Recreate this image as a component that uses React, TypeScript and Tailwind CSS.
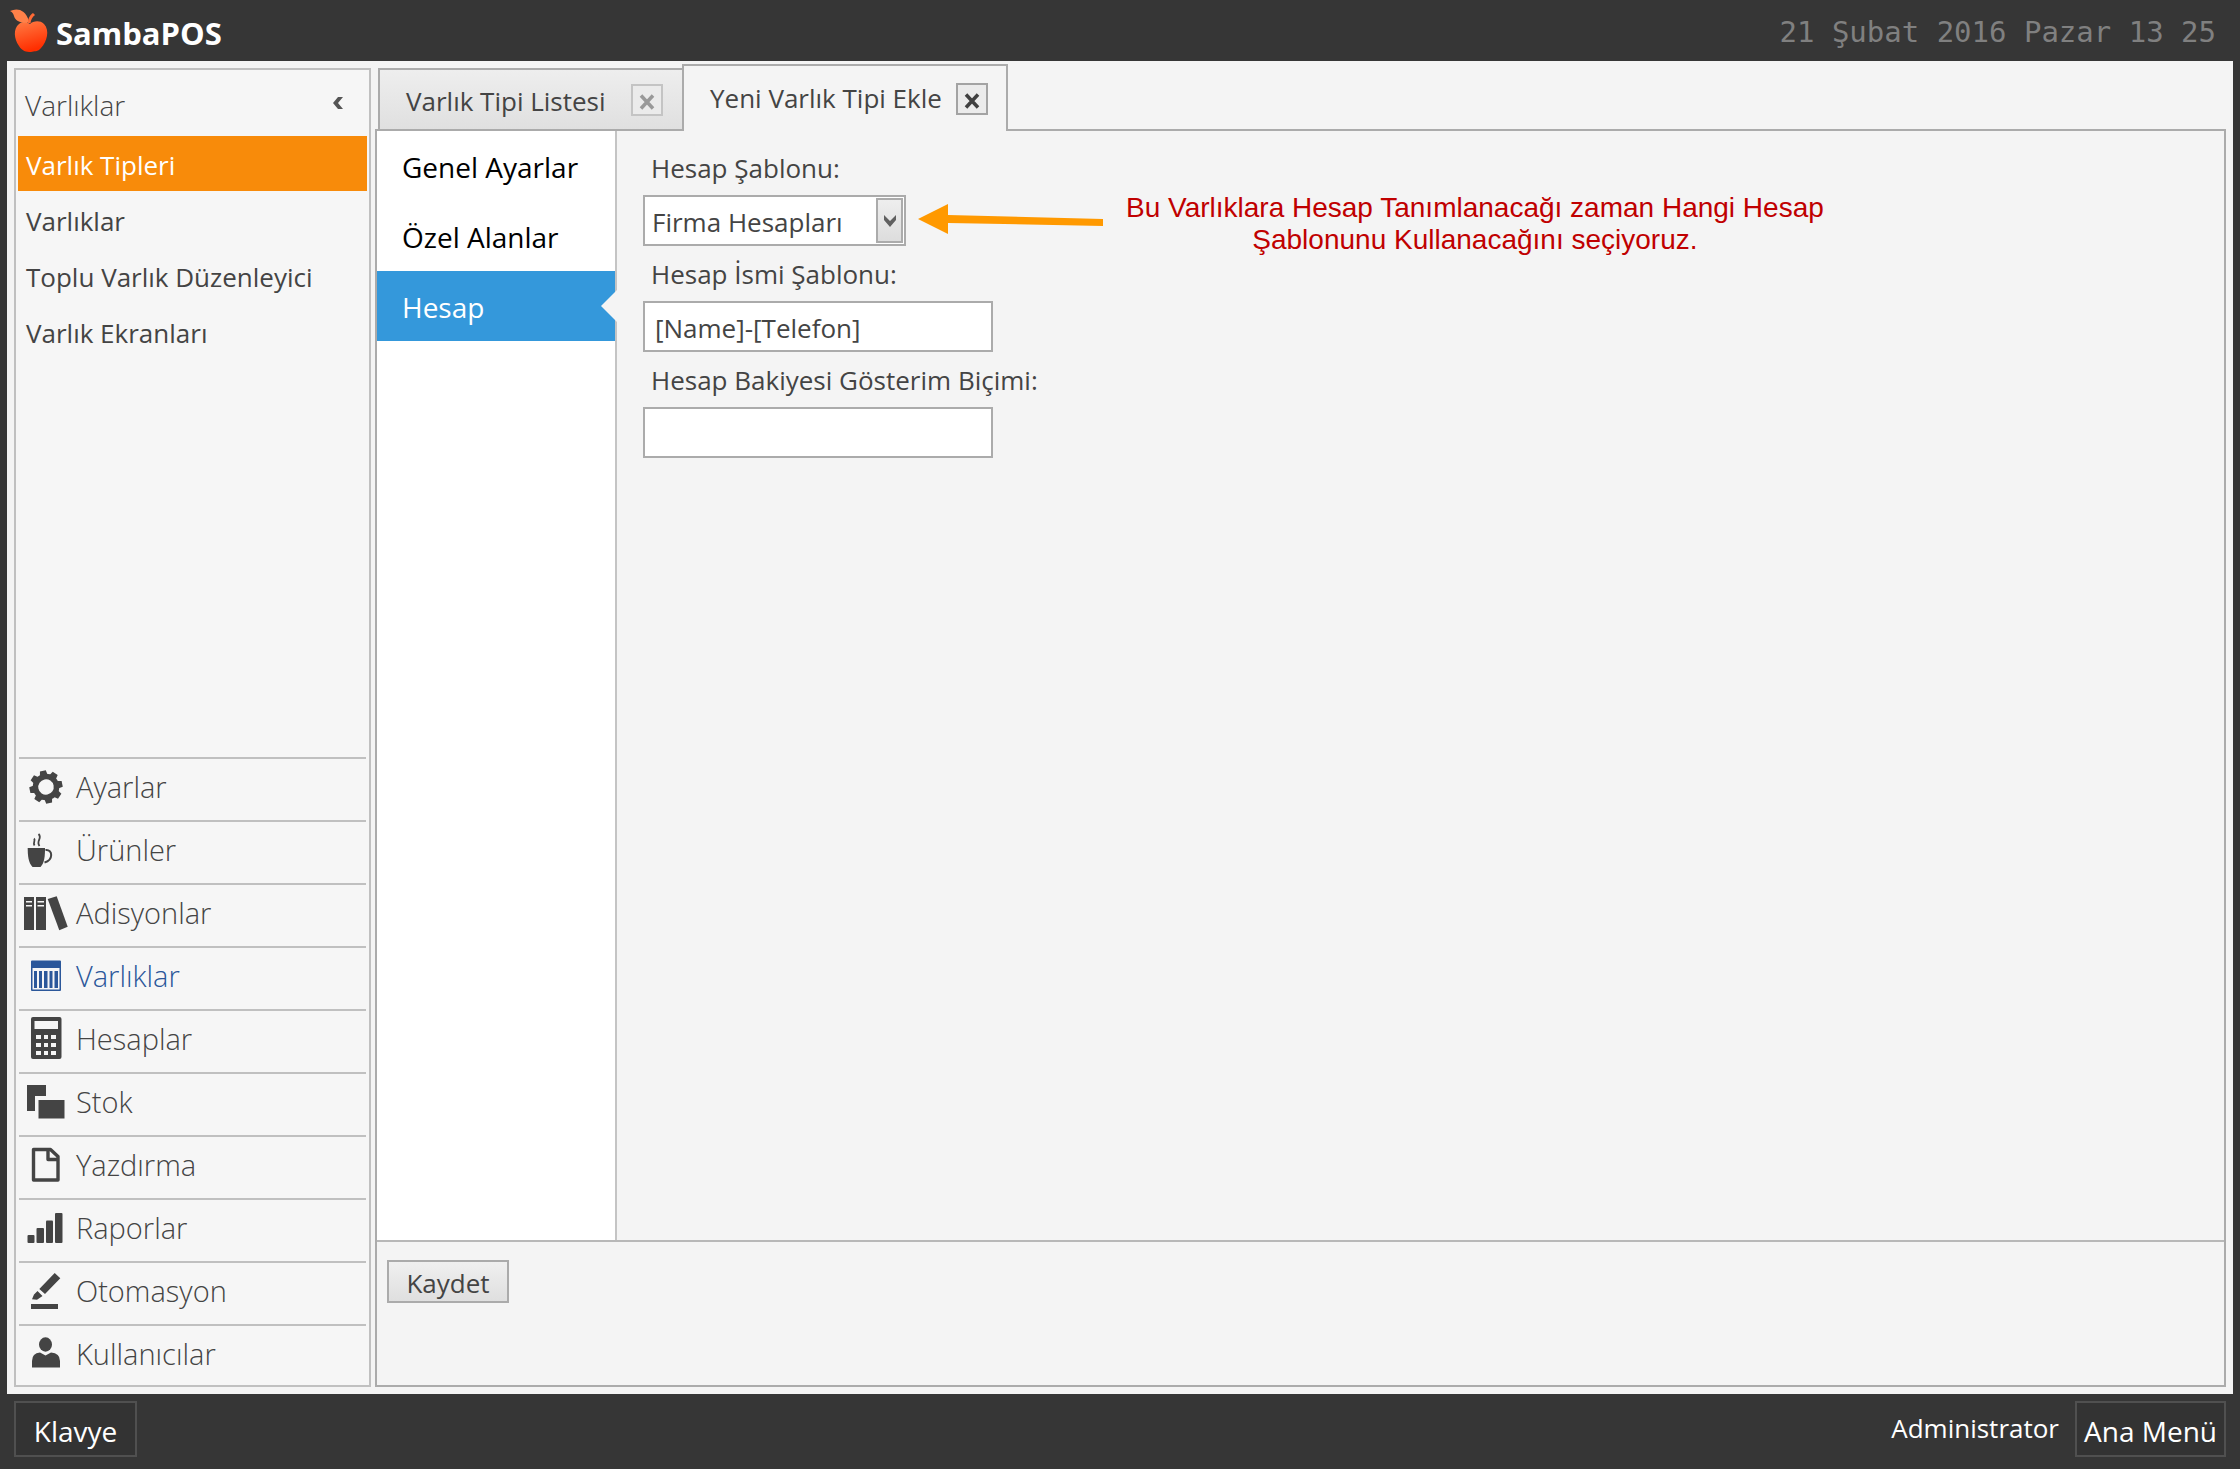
import React, { useState } from 'react';
import clsx from 'clsx';

interface NavItem {
  id: string;
  label: string;
  icon: React.ReactNode;
}

const gearTeeth = [0, 45, 90, 135, 180, 225, 270, 315];

const navItems: NavItem[] = [
  {
    id: 'ayarlar',
    label: 'Ayarlar',
    icon: (
      <g transform="rotate(-11 46 28)">
        <circle cx="46" cy="28" r="10.5" fill="none" stroke="currentColor" strokeWidth="5.5" />
        {gearTeeth.map((angle) => (
          <path key={angle} d="M42 17 L43 11.5 H49 L50 17 Z" transform={`rotate(${angle} 46 28)`} />
        ))}
      </g>
    )
  },
  {
    id: 'urunler',
    label: 'Ürünler',
    icon: (
      <>
        <path d="M27.7 26 H45 C45 34 44.5 41 40.5 45 H32.5 C28.5 41 27.7 34 27.7 26 Z" />
        <path
          d="M45.5 28 C53 27 53.5 38 44.5 40.5"
          fill="none"
          stroke="currentColor"
          strokeWidth="2"
        />
        <path
          d="M34 16.5 C36 18.5 32.5 20.5 34.5 23.5 M38.5 12 C43 16 35.5 19 39.5 24"
          fill="none"
          stroke="currentColor"
          strokeWidth="1.8"
        />
      </>
    )
  },
  {
    id: 'adisyonlar',
    label: 'Adisyonlar',
    icon: (
      <>
        <path
          fillRule="evenodd"
          d="M24 12 H34 V45 H24 Z M26 16 V17.5 H32 V16 Z M26 20 V21.5 H32 V20 Z M36 12 H46 V45 H36 Z M37.5 16 V17.5 H44 V16 Z M37.5 20 V21.5 H44 V20 Z"
        />
        <path d="M47.7 14 L56.7 11.3 L67.7 41.7 L59.3 45.3 Z" />
      </>
    )
  },
  {
    id: 'varliklar',
    label: 'Varlıklar',
    icon: (
      <path
        fillRule="evenodd"
        d="M32 12.5 H60 Q61 12.5 61 13.5 V42 Q61 43 60 43 H32 Q31 43 31 42 V13.5 Q31 12.5 32 12.5 Z M32.5 20 V41.5 H59.5 V20 Z M34 23 H37 V40 H34 Z M39 23 H42 V40 H39 Z M44 23 H47.5 V40 H44 Z M49.5 23 H52.5 V40 H49.5 Z M54.5 23 H58 V40 H54.5 Z"
      />
    )
  },
  {
    id: 'hesaplar',
    label: 'Hesaplar',
    icon: (
      <path
        fillRule="evenodd"
        d="M33 6 H59.5 Q61.5 6 61.5 8 V46 Q61.5 48 59.5 48 H33 Q31 48 31 46 V8 Q31 6 33 6 Z M34.5 10 V18 H58 V10 Z M36 24 V28 H41 V24 Z M44 24 V28 H48 V24 Z M51 24 V28 H56 V24 Z M36 32 V36 H41 V32 Z M44 32 V36 H48 V32 Z M51 32 V36 H56 V32 Z M36 40 V44 H41 V40 Z M44 40 V44 H48 V40 Z M51 40 V44 H56 V40 Z"
      />
    )
  },
  {
    id: 'stok',
    label: 'Stok',
    icon: <path d="M27 11 H46 V22 H35 V37 H27 Z M38.5 26 H64.5 V44.5 H38.5 Z" />
  },
  {
    id: 'yazdirma',
    label: 'Yazdırma',
    icon: (
      <path
        d="M33.5 12.5 H50.5 L58 19.5 V43 H33.5 Z M48 12 V22.5 H58"
        fill="none"
        stroke="currentColor"
        strokeWidth="3.4"
        strokeLinejoin="round"
      />
    )
  },
  {
    id: 'raporlar',
    label: 'Raporlar',
    icon: (
      <>
        <rect x="27.5" y="35" width="7" height="8" rx="1" />
        <rect x="36.5" y="28" width="7.5" height="15" rx="1" />
        <rect x="46" y="20.5" width="7" height="22.5" rx="1" />
        <rect x="55" y="13" width="7.5" height="30" rx="1" />
      </>
    )
  },
  {
    id: 'otomasyon',
    label: 'Otomasyon',
    icon: (
      <path d="M54.7 10 L60.3 15.3 L45 31 L39.3 26 Z M37.5 28 L42.5 33 L37 36.7 L32 36.3 L34 31.5 Z M31 41 H58 V46 H31 Z" />
    )
  },
  {
    id: 'kullanicilar',
    label: 'Kullanıcılar',
    icon: (
      <>
        <ellipse cx="45.5" cy="18.5" rx="6.5" ry="7.2" />
        <path d="M32 41.5 V35 Q32 27 40 26.5 L45.5 29.5 L51 26.5 Q60 27 60 35 V41.5 Z" />
      </>
    )
  }
];

const menuItems = ['Varlık Tipleri', 'Varlıklar', 'Toplu Varlık Düzenleyici', 'Varlık Ekranları'];
const sections = ['Genel Ayarlar', 'Özel Alanlar', 'Hesap'];

const AppleLogo = () => (
  <svg viewBox="0 0 40 44" className="h-11 w-10 shrink-0" aria-hidden="true">
    <defs>
      <linearGradient id="apple" x1="0" y1="0" x2="0.3" y2="1">
        <stop offset="0" stopColor="#ff7d45" />
        <stop offset="1" stopColor="#ff2e00" />
      </linearGradient>
    </defs>
    <path
      fill="url(#apple)"
      d="M20 15 C23 12 30 11 34 15 C40 21 37 33 31 39 C28 43 24 42 21 43 C16 43 12 42 9 37 C4 30 3 20 9 15 C13 12 17 13 20 15 Z"
    />
    <path fill="#ff8149" d="M0 2 C7 -1 15 0 19 12 L17 14 C9 14 5 11 4 7 C3 4 2 3 0 2 Z" />
    <path fill="#ff6a35" d="M18 14 C18 9 20 6 23 4 L25 6 C22 8 21 11 20.5 14 Z" />
  </svg>
);

const CloseButton = ({ label, muted }: { label: string; muted?: boolean }) => (
  <button
    aria-label={label}
    className={clsx(
      'flex h-8 w-8 shrink-0 items-center justify-center border-2 bg-[#ebebeb]',
      muted ? 'border-[#c4c4c4] text-[#999999]' : 'border-[#a3a3a3] text-[#404040]'
    )}
  >
    <svg viewBox="0 0 16 16" className="mt-1 h-4 w-4" aria-hidden="true">
      <path d="M2 1.5 L14 14.5 M14 1.5 L2 14.5" stroke="currentColor" strokeWidth="3.5" />
    </svg>
  </button>
);

const Sidebar = () => {
  const [activeItem, setActiveItem] = useState('Varlık Tipleri');
  const [activeNav, setActiveNav] = useState('varliklar');

  return (
    <aside className="flex w-[357px] shrink-0 flex-col border-2 border-[#c0c0c0] bg-[#f6f6f6]">
      <div className="flex h-[66px] items-center justify-between pr-[25px] pl-[9px]">
        <h2 className="pt-[3px] text-[28px] font-light text-[#444444]">Varlıklar</h2>
        <button aria-label="Daralt" className="text-[#555555]">
          <svg viewBox="0 0 12 12" className="h-3 w-3" aria-hidden="true">
            <path d="M6 0 H11 L6 6 L11 12 H6 L1 6 Z" fill="currentColor" />
          </svg>
        </button>
      </div>
      <ul className="px-0.5">
        {menuItems.map((item) => (
          <li key={item} className="pb-px">
            <button
              onClick={() => setActiveItem(item)}
              className={clsx(
                'flex h-[55px] w-full items-center px-2 pt-1 text-[26px] whitespace-nowrap',
                item === activeItem ? 'bg-[#f88b0a] text-white' : 'text-[#444444]'
              )}
            >
              {item}
            </button>
          </li>
        ))}
      </ul>
      <nav className="mt-auto px-[3px]">
        {navItems.map((item) => (
          <button
            key={item.id}
            onClick={() => setActiveNav(item.id)}
            className={clsx(
              'flex h-[63px] w-full items-start border-t-2 border-[#c0c0c0] pl-[3px] last:h-[61px]',
              item.id === activeNav ? 'text-[#2b579a]' : 'text-[#444444]'
            )}
          >
            <svg viewBox="22 0 48 61" className="h-[61px] w-12 shrink-0" fill="currentColor" aria-hidden="true">
              {item.icon}
            </svg>
            <span className="pt-1 pl-1.5 text-[29px] leading-[48px] font-light">{item.label}</span>
          </button>
        ))}
      </nav>
    </aside>
  );
};

const SectionList = () => {
  const [active, setActive] = useState('Hesap');

  return (
    <ul className="w-60 shrink-0 border-r-2 border-[#c4c4c4] bg-white">
      {sections.map((section) => (
        <li key={section} className="relative">
          <button
            onClick={() => setActive(section)}
            className={clsx(
              'flex h-[70px] w-full items-center px-[25px] pt-0.5 text-[28px] whitespace-nowrap',
              section === active ? 'bg-[#3498db] text-white' : 'text-black'
            )}
          >
            {section}
          </button>
          {section === active && (
            <svg viewBox="0 0 16 32" className="absolute top-[19px] -right-0.5 h-8 w-4" aria-hidden="true">
              <path d="M16 0 V32 L0 16 Z" fill="#f4f4f4" />
            </svg>
          )}
        </li>
      ))}
    </ul>
  );
};

const AccountForm = () => (
  <form className="flex w-[350px] flex-col pt-[11px]" onSubmit={(e) => e.preventDefault()}>
    <label htmlFor="template" className="h-[53px] pt-1.5 pl-2 text-[26px] leading-[40px] whitespace-nowrap">
      Hesap Şablonu:
    </label>
    <div className="relative h-[53px] w-[263px]">
      <select
        id="template"
        className="h-[51px] w-full appearance-none border-2 border-[#ababab] bg-white pt-1 pl-[7px] text-[26px]"
      >
        <option>Firma Hesapları</option>
      </select>
      <span className="pointer-events-none absolute top-[3px] right-[3px] flex h-[45px] w-[27px] items-center justify-center border-2 border-[#ababab] bg-gradient-to-b from-[#eeeeee] to-[#dddddd]">
        <svg viewBox="0 0 12 12" className="h-3 w-3" aria-hidden="true">
          <path d="M0 0 L6 6 L12 0 V5 L6 12 L0 5 Z" fill="#606060" />
        </svg>
      </span>
    </div>
    <label htmlFor="name" className="h-[53px] pt-1.5 pl-2 text-[26px] leading-[40px] whitespace-nowrap">
      Hesap İsmi Şablonu:
    </label>
    <div className="h-[53px]">
      <input
        id="name"
        type="text"
        defaultValue="[Name]-[Telefon]"
        className="h-[51px] w-full border-2 border-[#ababab] bg-white pt-0.5 pl-2.5 text-[26px]"
      />
    </div>
    <label htmlFor="balance" className="h-[53px] pt-1.5 pl-2 text-[26px] leading-[40px] whitespace-nowrap">
      Hesap Bakiyesi Gösterim Biçimi:
    </label>
    <input
      id="balance"
      type="text"
      className="h-[51px] w-full border-2 border-[#ababab] bg-white pt-0.5 pl-2.5 text-[26px]"
    />
  </form>
);

const App: React.FC = () => {
  return (
    <div className="flex min-h-screen flex-col bg-[#363636] font-['Open_Sans','Noto_Sans',sans-serif] text-[#444444]">
      <header className="flex h-[61px] items-center justify-between pr-6 pl-2.5">
        <div className="flex items-center gap-1.5">
          <AppleLogo />
          <h1 className="pt-1 text-[31px] leading-10 font-bold text-white">SambaPOS</h1>
        </div>
        <time className="pt-1 font-['DejaVu_Sans_Mono',monospace] text-[29px] text-[#808080]">
          21 Şubat 2016 Pazar 13 25
        </time>
      </header>

      <div className="mx-[7px] flex flex-1 gap-1 bg-[#f4f4f4] px-[7px] pb-[7px]">
        <div className="flex pt-[7px]">
          <Sidebar />
        </div>

        <main className="flex flex-1 flex-col pt-[3px]">
          <div className="relative z-10 -mb-0.5 flex items-end pl-[3px]" role="tablist">
            <div className="flex h-[63px] w-[304px] items-center justify-between border-2 border-r-0 border-[#ababab] bg-gradient-to-b from-[#eeeeee] to-[#e0e0e0] pr-[19px] pl-[26px]">
              <button role="tab" aria-selected="false" className="pt-1 text-[26px] whitespace-nowrap">
                Varlık Tipi Listesi
              </button>
              <CloseButton label="Varlık Tipi Listesi sekmesini kapat" muted />
            </div>
            <div className="flex h-[67px] w-[326px] items-center justify-between border-2 border-b-0 border-[#ababab] bg-[#f4f4f4] pr-[18px] pl-[26px]">
              <button role="tab" aria-selected="true" className="text-[26px] whitespace-nowrap">
                Yeni Varlık Tipi Ekle
              </button>
              <CloseButton label="Yeni Varlık Tipi Ekle sekmesini kapat" />
            </div>
          </div>

          <div className="flex flex-1 flex-col border-2 border-[#ababab]">
            <div className="flex flex-1">
              <SectionList />
              <div className="flex flex-1 items-start pl-[26px]">
                <AccountForm />
                <div className="-ml-[75px] flex items-start gap-[22px] pt-[58px]">
                  <svg viewBox="0 0 186 60" className="h-[60px] w-[186px] shrink-0" aria-hidden="true">
                    <path d="M0 30 L30 15 V26 L185 30 V37 L30 34 V45 Z" fill="#ff9900" />
                  </svg>
                  <p className="pt-[3px] text-center font-['Liberation_Sans',sans-serif] text-[28px] leading-8 text-[#c00000]">
                    Bu Varlıklara Hesap Tanımlanacağı zaman Hangi Hesap
                    <br />
                    Şablonunu Kullanacağını seçiyoruz.
                  </p>
                </div>
              </div>
            </div>
            <div className="h-[145px] border-t-2 border-[#b8b8b8] px-2.5 pt-[18px]">
              <button className="h-[43px] w-[122px] border-2 border-[#ababab] bg-gradient-to-b from-[#f0f0f0] to-[#dfdfdf] pt-0.5 text-[26px] leading-[39px]">
                Kaydet
              </button>
            </div>
          </div>
        </main>
      </div>

      <footer className="flex h-[75px] items-center justify-between px-3.5 pb-1.5 text-[28px] text-white">
        <button className="h-14 w-[123px] border-2 border-[#505050] bg-[#333333] pt-1">Klavye</button>
        <div className="flex items-center gap-4">
          <span className="text-[26px]">Administrator</span>
          <button className="h-14 w-[151px] border-2 border-[#505050] bg-[#333333] pt-1 whitespace-nowrap">
            Ana Menü
          </button>
        </div>
      </footer>
    </div>
  );
};

export default App;
